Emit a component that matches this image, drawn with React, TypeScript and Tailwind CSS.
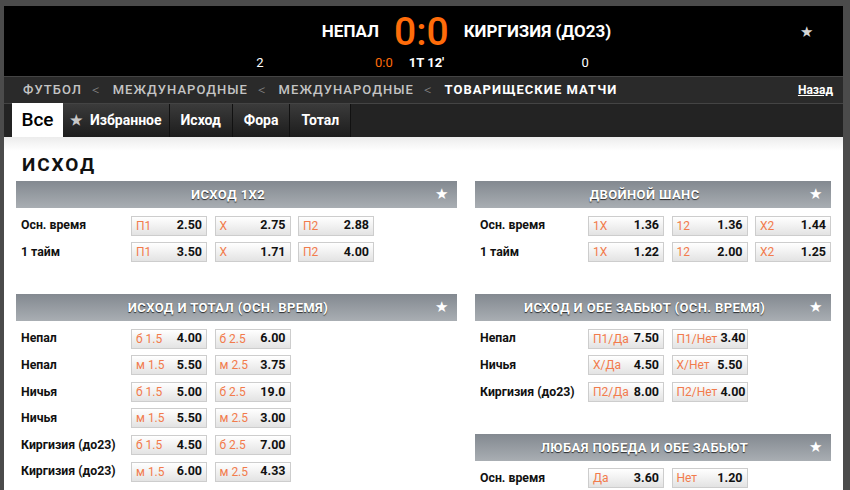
import React from "react";

type Odd = [string, string];
type Row = { label: string; odds: Odd[] };
type Market = { title: string; rows: Row[] };

const left: Market[] = [
  {
    title: "Исход 1Х2",
    rows: [
      { label: "Осн. время", odds: [["П1", "2.50"], ["Х", "2.75"], ["П2", "2.88"]] },
      { label: "1 тайм", odds: [["П1", "3.50"], ["Х", "1.71"], ["П2", "4.00"]] },
    ],
  },
  {
    title: "Исход и тотал (осн. время)",
    rows: [
      { label: "Непал", odds: [["б 1.5", "4.00"], ["б 2.5", "6.00"]] },
      { label: "Непал", odds: [["м 1.5", "5.50"], ["м 2.5", "3.75"]] },
      { label: "Ничья", odds: [["б 1.5", "5.00"], ["б 2.5", "19.0"]] },
      { label: "Ничья", odds: [["м 1.5", "5.50"], ["м 2.5", "3.00"]] },
      { label: "Киргизия (до23)", odds: [["б 1.5", "4.50"], ["б 2.5", "7.00"]] },
      { label: "Киргизия (до23)", odds: [["м 1.5", "6.00"], ["м 2.5", "4.33"]] },
    ],
  },
];

const right: Market[] = [
  {
    title: "Двойной шанс",
    rows: [
      { label: "Осн. время", odds: [["1Х", "1.36"], ["12", "1.36"], ["Х2", "1.44"]] },
      { label: "1 тайм", odds: [["1Х", "1.22"], ["12", "2.00"], ["Х2", "1.25"]] },
    ],
  },
  {
    title: "Исход и обе забьют (осн. время)",
    rows: [
      { label: "Непал", odds: [["П1/Да", "7.50"], ["П1/Нет", "3.40"]] },
      { label: "Ничья", odds: [["Х/Да", "4.50"], ["Х/Нет", "5.50"]] },
      { label: "Киргизия (до23)", odds: [["П2/Да", "8.00"], ["П2/Нет", "4.00"]] },
    ],
  },
  {
    title: "Любая победа и обе забьют",
    rows: [{ label: "Осн. время", odds: [["Да", "3.60"], ["Нет", "1.20"]] }],
  },
];

function OddButton({ odd }: { odd: Odd }) {
  return (
    <div className="flex h-[20px] w-[76px] items-center justify-between gap-[3px] whitespace-nowrap border border-[#cdcdcd] bg-linear-to-b from-white to-[#e3e3e3] pl-[4px] pr-[4px] text-[12px] leading-none">
      <span className="text-[#f27b4c]">{odd[0]}</span>
      <span className="text-[12.5px] font-bold text-[#111]">{odd[1]}</span>
    </div>
  );
}

function MarketBlock({ market, labelW }: { market: Market; labelW: string }) {
  return (
    <div className="mb-[32px]">
      <div className="flex h-[27px] items-center bg-linear-to-b from-[#838990] to-[#a9aeb3] pl-[5px] pr-[9px]">
        <span className="flex-1 text-center text-[13px] font-bold uppercase tracking-[0.03em] text-white [text-shadow:0_1px_1px_rgba(0,0,0,0.75)]">
          {market.title}
        </span>
        <span className="text-[15px] leading-none text-white">★</span>
      </div>
      <div className="flex flex-col gap-[6.6px] pt-[7.5px]">
        {market.rows.map((row, i) => (
          <div key={i} className="flex items-center">
            <div className={`${labelW} pl-[5px] text-[12.3px] font-bold text-[#111]`}>{row.label}</div>
            <div className="flex gap-[7.5px]">
              {row.odds.map((o, j) => (
                <OddButton key={j} odd={o} />
              ))}
            </div>
          </div>
        ))}
      </div>
    </div>
  );
}

export default function App() {
  const crumbs = ["Футбол", "Международные", "Международные"];
  const tabs = ["Исход", "Фора", "Тотал"];
  return (
    <div className="h-[490px] w-[850px] overflow-hidden bg-[#4b4b4b] pl-[4px] pr-[7px] pt-[6px] font-['Roboto',sans-serif]">
      {/* scoreboard */}
      <div className="h-[70px] bg-black pt-[7px]">
        <div className="grid grid-cols-[375px_auto_1fr] items-center gap-x-[15px]">
          <div className="text-right text-[17px] font-bold text-white">НЕПАЛ</div>
          <div className="text-[39px] font-medium leading-[38px] text-[#ff6c0a]">0:0</div>
          <div className="flex items-center justify-between pr-[30px]">
            <span className="text-[17px] font-bold text-white">КИРГИЗИЯ (ДО23)</span>
            <span className="text-[15px] text-[#d6d6d6]">★</span>
          </div>
        </div>
        <div className="mt-[4px] flex items-center pl-[141px] text-[13px] leading-[16px]">
          <span className="w-[230px] text-center text-white">2</span>
          <span className="text-[#ff6c0a]">0:0</span>
          <span className="ml-[16px] font-bold text-white">1Т 12'</span>
          <span className="w-[282px] text-center text-white">0</span>
        </div>
      </div>

      {/* breadcrumbs */}
      <div className="flex h-[28px] items-center border-y border-[#444] bg-[#2a2a2a] pl-[19px] pr-[10px] text-[13px] uppercase tracking-[0.08em]">
        {crumbs.map((c, i) => (
          <React.Fragment key={i}>
            <span className="font-medium text-[#c4c4c4]">{c}</span>
            <span className="ml-[10px] mr-[13px] text-[15px] font-light tracking-normal text-[#8a8a8a]">&lt;</span>
          </React.Fragment>
        ))}
        <span className="font-bold text-white">Товарищеские матчи</span>
        <span className="ml-auto text-[12px] font-bold normal-case tracking-normal text-white underline">Назад</span>
      </div>

      {/* tabs */}
      <div className="flex h-[33px] items-end bg-[#232323] pl-[8px]">
        <div className="flex h-[34px] w-[51px] items-center justify-center bg-white text-[19px] font-medium text-black">
          Все
        </div>
        <div className="flex h-[33px] items-center gap-[7px] border-r border-[#111] bg-linear-to-b from-[#3b3b3b] to-[#1d1d1d] px-[7px] text-[14px] font-bold text-white">
          <span className="text-[14px] text-[#c8c8c8]">★</span>
          Избранное
        </div>
        {tabs.map((t) => (
          <div
            key={t}
            className="flex h-[33px] items-center border-r border-[#111] bg-linear-to-b from-[#3b3b3b] to-[#1d1d1d] px-[11px] text-[14px] font-bold text-white"
          >
            {t}
          </div>
        ))}
      </div>

      {/* content */}
      <div className="h-[400px] bg-[linear-gradient(#ececec,#ffffff_14px)] px-[12px] pt-[16px]">
        <div className="mb-[4px] pl-[6px] text-[19px] font-bold uppercase leading-[24px] tracking-[0.1em] text-[#111]">
          Исход
        </div>
        <div className="grid grid-cols-[441px_356px] gap-x-[18px]">
          <div className="flex flex-col">
            {left.map((m, i) => (
              <MarketBlock key={i} market={m} labelW="w-[115px]" />
            ))}
          </div>
          <div className="flex flex-col">
            {right.map((m, i) => (
              <MarketBlock key={i} market={m} labelW="w-[113px]" />
            ))}
          </div>
        </div>
      </div>
    </div>
  );
}
